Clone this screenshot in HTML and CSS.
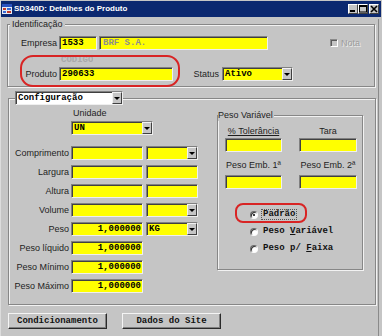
FILE: index.html
```html
<!DOCTYPE html>
<html lang="pt">
<head>
<meta charset="utf-8">
<title>SD340D: Detalhes do Produto</title>
<link rel="stylesheet" href="styles.css">
</head>
<body>
<div class="window">
  <div class="titlebar">
    <svg class="appicon" width="10" height="10" viewBox="0 0 10 10">
      <rect x="0" y="0" width="10" height="10" fill="#e8ecf4"/>
      <rect x="0" y="0" width="10" height="3" fill="#2a52be"/>
      <rect x="1" y="4" width="3" height="2" fill="#c0392b"/>
      <rect x="5" y="4" width="4" height="2" fill="#3a6ad4"/>
      <rect x="1" y="7" width="3" height="2" fill="#3a6ad4"/>
      <rect x="5" y="7" width="4" height="2" fill="#c0392b"/>
    </svg>
    <span class="title">SD340D: Detalhes do Produto</span>
    <div class="caption-buttons">
      <span class="cbtn"><svg width="8" height="8" viewBox="0 0 8 8"><rect x="1" y="5" width="5" height="2" fill="#000"/></svg></span>
      <span class="cbtn"><svg width="8" height="8" viewBox="0 0 8 8"><rect x="0.5" y="0.5" width="7" height="6.5" fill="none" stroke="#000"/><rect x="0" y="0" width="8" height="2" fill="#000"/></svg></span>
      <span class="cbtn close"><svg width="8" height="8" viewBox="0 0 8 8"><path d="M1 1 L7 7 M7 1 L1 7" stroke="#000" stroke-width="1.6"/></svg></span>
    </div>
  </div>

  <div class="client">
    <fieldset class="group ident">
      <legend>Identificação</legend>
      <div class="ident-body">
        <div class="frow">
          <span class="lbl w-id">Empresa</span>
          <span class="field w-emp">1533</span>
          <span class="field w-empname disabled">BRF S.A.</span>
          <span class="check"><span class="checkbox"></span><span class="check-text">Nota</span></span>
        </div>
        <div class="frow produto-row">
          <span class="lbl w-id">Produto</span>
          <span class="field w-prod">290633</span>
          <span class="lbl w-status">Status</span>
          <span class="field combo w-status-combo"><span class="val">Ativo</span><span class="dd"></span></span>
          <span class="hint">CODIGO</span>
          <span class="highlight hl-prod"></span>
        </div>
      </div>
    </fieldset>

    <fieldset class="group config">
      <legend class="cfg-legend"><span class="field combo white w-cfg"><span class="val">Configuração</span><span class="dd"></span></span></legend>
      <div class="cfg-body">
        <div class="dims">
          <div class="unit-label">Unidade</div>
          <span class="field combo w-unit"><span class="val">UN</span><span class="dd"></span></span>
          <div class="drow first">
            <span class="lbl w-dim">Comprimento</span>
            <span class="field w-f1"></span>
            <span class="field combo w-f2"><span class="val"></span><span class="dd"></span></span>
          </div>
          <div class="drow">
            <span class="lbl w-dim">Largura</span>
            <span class="field w-f1"></span>
            <span class="field w-f2"></span>
          </div>
          <div class="drow">
            <span class="lbl w-dim">Altura</span>
            <span class="field w-f1"></span>
            <span class="field w-f2"></span>
          </div>
          <div class="drow">
            <span class="lbl w-dim">Volume</span>
            <span class="field w-f1"></span>
            <span class="field combo w-f2"><span class="val"></span><span class="dd"></span></span>
          </div>
          <div class="drow">
            <span class="lbl w-dim">Peso</span>
            <span class="field num w-f1">1,000000</span>
            <span class="field combo w-f2"><span class="val">KG</span><span class="dd"></span></span>
          </div>
          <div class="drow">
            <span class="lbl w-dim">Peso líquido</span>
            <span class="field num w-f1">1,000000</span>
          </div>
          <div class="drow">
            <span class="lbl w-dim">Peso Mínimo</span>
            <span class="field num w-f1">1,000000</span>
          </div>
          <div class="drow">
            <span class="lbl w-dim">Peso Máximo</span>
            <span class="field num w-f1">1,000000</span>
          </div>
        </div>

        <fieldset class="group peso">
          <legend>Peso Variável</legend>
          <div class="peso-body">
            <div class="pgrid">
              <span class="plabel"><u>% Tolerância</u></span>
              <span class="plabel">Tara</span>
              <span class="field pf1"></span>
              <span class="field pf1"></span>
              <span class="plabel l2">Peso Emb. 1ª</span>
              <span class="plabel l2">Peso Emb. 2ª</span>
              <span class="field pf2"></span>
              <span class="field pf2"></span>
            </div>
            <div class="radios">
              <div class="radio-row">
                <span class="radio checked"></span><span class="rtext focus">Padrão</span>
                <span class="highlight hl-padrao"></span>
              </div>
              <div class="radio-row">
                <span class="radio"></span><span class="rtext">Peso <u>V</u>ariável</span>
              </div>
              <div class="radio-row">
                <span class="radio"></span><span class="rtext">Peso p/ <u>F</u>aixa</span>
              </div>
            </div>
          </div>
        </fieldset>
      </div>
    </fieldset>

    <div class="buttons">
      <span class="btn">Condicionamento</span>
      <span class="btn">Dados do Site</span>
    </div>
  </div>
</div>
</body>
</html>
```

FILE: styles.css
```css
* { box-sizing: border-box; }
html, body { margin: 0; padding: 0; }
body {
  width: 382px;
  height: 336px;
  overflow: hidden;
  background: #c5c5c5;
  font-family: "Liberation Sans", Arial, sans-serif;
  font-size: 9px;
  color: #1e1e1e;
}
.window {
  width: 382px;
  height: 336px;
  padding: 1px 1px 0 0;
  border-left: 1px solid #dcdcdc;
  background: #c5c5c5;
}

/* title bar */
.titlebar {
  height: 16px;
  background: #0b2870;
  display: flex;
  align-items: center;
  padding-left: 1px;
}
.appicon { flex: none; margin-right: 2px; }
.title {
  flex: 1;
  color: #fff;
  font-weight: bold;
  font-size: 8px;
  line-height: 16px;
  white-space: nowrap;
}
.caption-buttons { display: flex; margin-right: 2px; }
.cbtn {
  width: 10px;
  height: 10px;
  background: #c5c5c5;
  border: 1px solid;
  border-color: #fff #404040 #404040 #fff;
  display: flex;
  align-items: center;
  justify-content: center;
}
.cbtn svg { display: block; }
.cbtn.close { margin-left: 1px; }

/* client area */
.client {
  height: 319px;
  margin-right: 2px;
  border-right: 1px solid #8a8a8a;
  padding-left: 6px;
}

/* group boxes */
.group {
  margin: 0;
  padding: 0;
  min-width: 0;
  border: 1px solid #878787;
  box-shadow: inset 1px 1px 0 #f2f2f2, 1px 1px 0 #f2f2f2;
}
.group > legend {
  padding: 0 2px;
  margin-left: 2px;
  line-height: 11px;
  height: 11px;
  background: #c5c5c5;
  color: #1e1e1e;
}

.ident { width: 368px; margin-top: 2px; }
.ident-body { padding: 6px 0 5px 0; }

.frow { display: flex; align-items: center; height: 14px; position: relative; }
.produto-row { margin-top: 17px; }

.lbl { line-height: 14px; text-align: right; white-space: nowrap; flex: none; }
.w-id { width: 49px; margin-right: 2px; }
.w-status { width: 26px; margin-left: 20px; margin-right: 3px; }

/* fields */
.field {
  display: flex;
  align-items: center;
  flex: none;
  height: 14px;
  background: #ffff00;
  border: 1px solid;
  border-color: #808080 #efefef #efefef #808080;
  box-shadow: inset 1px 1px 0 #404040;
  padding: 0 1px 0 2px;
  font-family: "Liberation Mono", "Courier New", monospace;
  font-weight: bold;
  font-size: 9px;
  line-height: 12px;
  color: #000;
  white-space: nowrap;
  overflow: hidden;
}
.field.white { background: #fff; }
.field.num { justify-content: flex-end; }
.field.disabled { color: #8d8d8d; padding-left: 3px; }
.combo { padding-right: 0; }
.combo .val { flex: 1; }
.dd {
  flex: none;
  width: 10px;
  height: 12px;
  background: #c5c5c5;
  border: 1px solid;
  border-color: #f2f2f2 #404040 #404040 #f2f2f2;
  display: flex;
  align-items: center;
  justify-content: center;
}
.dd::before {
  content: "";
  border-left: 3px solid transparent;
  border-right: 3px solid transparent;
  border-top: 3px solid #000;
}

.w-emp { width: 38px; margin-right: 2px; }
.w-empname { width: 169px; }
.w-prod { width: 114px; }
.w-status-combo { width: 71px; }

.check { display: flex; align-items: center; margin-left: 62px; }
.checkbox {
  width: 8px;
  height: 8px;
  border: 1px solid;
  border-color: #8a8a8a #fff #fff #8a8a8a;
  box-shadow: inset 1px 1px 0 #5a5a5a;
  background: #c5c5c5;
}
.check-text { margin-left: 3px; color: #9c9c9c; text-shadow: 1px 1px 0 #ececec; line-height: 10px; }

.hint {
  position: absolute;
  left: 53px;
  top: -11px;
  height: 8px;
  overflow: hidden;
  font-family: "Liberation Mono", monospace;
  font-weight: bold;
  font-size: 9px;
  line-height: 9px;
  color: #a9a9a9;
}
.highlight {
  position: absolute;
  border: 2px solid #d82424;
  pointer-events: none;
}
.hl-prod { left: 12px; top: -12px; width: 160px; height: 32px; border-radius: 13px; }

/* configuration group */
.config { width: 368px; margin: 4px 0 0 1px; }
.cfg-legend.cfg-legend { padding: 0; margin-left: 6px; height: 14px; line-height: 14px; background: transparent; }
.w-cfg { width: 108px; }
.cfg-body { display: flex; align-items: flex-start; padding: 3px 0 11px 0; }

.dims { width: 208px; flex: none; }
.unit-label { padding-left: 64px; line-height: 11px; height: 11px; }
.w-unit { width: 82px; margin: 2px 0 0 62px; }
.drow { display: flex; height: 14px; margin-top: 5px; }
.drow.first { margin-top: 11px; }
.w-dim { width: 60px; margin-right: 2px; }
.w-f1 { width: 72px; margin-right: 3px; }
.w-f2 { width: 52px; }

/* peso variável */
.peso { width: 146px; margin-top: 2px; flex: none; }
.peso > legend { margin-left: 0; padding: 0 1px 0 0; }
.peso-body { padding: 5px 0 12px 7px; }
.pgrid { display: grid; grid-template-columns: 57px 58px; column-gap: 17px; }
.plabel { text-align: center; line-height: 11px; height: 11px; white-space: nowrap; }
.pgrid .field { width: 100%; }
.pf1 { margin-top: 1px; }
.l2 { margin-top: 8px; }
.pf2 { margin-top: 4px; }

.radios { margin-top: 17px; }
.radio-row { display: flex; align-items: center; height: 17px; padding-left: 25px; position: relative; }
.radio {
  width: 8px;
  height: 8px;
  border-radius: 50%;
  background: #fff;
  border: 1px solid;
  border-color: #6a6a6a #fafafa #fafafa #6a6a6a;
  box-shadow: inset 1px 1px 0 #303030;
  position: relative;
  flex: none;
}
.radio.checked::after {
  content: "";
  position: absolute;
  left: 2px;
  top: 2px;
  width: 2px;
  height: 2px;
  background: #000;
  border-radius: 50%;
}
.rtext {
  margin-left: 4px;
  padding: 0 1px;
  font-family: "Liberation Mono", monospace;
  font-weight: bold;
  font-size: 9px;
  line-height: 9px;
  color: #111;
  white-space: nowrap;
}
.rtext.focus { outline: 1px dotted #555; outline-offset: 0; }
.hl-padrao { left: 10px; top: -3px; width: 72px; height: 20px; border-radius: 8px; }

/* bottom buttons */
.buttons { display: flex; gap: 15px; margin: 8px 0 0 1px; }
.btn {
  width: 99px;
  height: 16px;
  border: 1px solid;
  border-color: #f4f4f4 #2a2a2a #2a2a2a #f4f4f4;
  box-shadow: inset -1px -1px 0 #808080;
  background: #c5c5c5;
  font-family: "Liberation Mono", monospace;
  font-weight: bold;
  font-size: 9px;
  color: #111;
  display: flex;
  align-items: center;
  justify-content: center;
}
```
